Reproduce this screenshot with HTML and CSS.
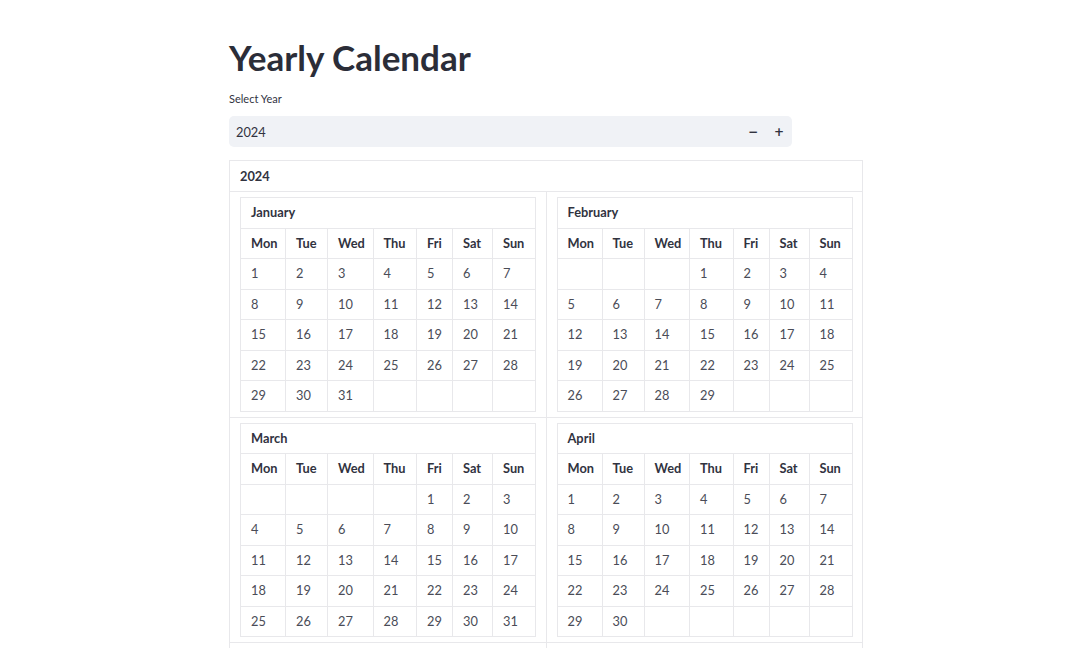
FILE: index.html
```html
<!DOCTYPE html>
<html lang="en">
<head>
<meta charset="utf-8">
<title>Yearly Calendar</title>
<link rel="stylesheet" href="styles.css">
</head>
<body>
<main class="page">
  <h1 class="title">Yearly Calendar</h1>
  <div class="field">
    <label class="field-label" for="year">Select Year</label>
    <div class="number-input">
      <input id="year" class="number-value" type="text" value="2024">
      <button class="step" type="button" aria-label="Decrement">&minus;</button>
      <button class="step" type="button" aria-label="Increment">+</button>
    </div>
  </div>

  <table class="year">
    <thead>
      <tr><th colspan="2" class="year-head">2024</th></tr>
    </thead>
    <tbody>
      <tr>
        <td class="year-cell">
          <table class="month">
            <colgroup><col class="c1"><col class="c2"><col class="c3"><col class="c4"><col class="c5"><col class="c6"><col class="c7"></colgroup>
            <tr><th colspan="7" class="month-name">January</th></tr>
            <tr class="dow"><th>Mon</th><th>Tue</th><th>Wed</th><th>Thu</th><th>Fri</th><th>Sat</th><th>Sun</th></tr>
            <tr><td>1</td><td>2</td><td>3</td><td>4</td><td>5</td><td>6</td><td>7</td></tr>
            <tr><td>8</td><td>9</td><td>10</td><td>11</td><td>12</td><td>13</td><td>14</td></tr>
            <tr><td>15</td><td>16</td><td>17</td><td>18</td><td>19</td><td>20</td><td>21</td></tr>
            <tr><td>22</td><td>23</td><td>24</td><td>25</td><td>26</td><td>27</td><td>28</td></tr>
            <tr><td>29</td><td>30</td><td>31</td><td></td><td></td><td></td><td></td></tr>
          </table>
        </td>
        <td class="year-cell">
          <table class="month">
            <colgroup><col class="c1"><col class="c2"><col class="c3"><col class="c4"><col class="c5"><col class="c6"><col class="c7"></colgroup>
            <tr><th colspan="7" class="month-name">February</th></tr>
            <tr class="dow"><th>Mon</th><th>Tue</th><th>Wed</th><th>Thu</th><th>Fri</th><th>Sat</th><th>Sun</th></tr>
            <tr><td></td><td></td><td></td><td>1</td><td>2</td><td>3</td><td>4</td></tr>
            <tr><td>5</td><td>6</td><td>7</td><td>8</td><td>9</td><td>10</td><td>11</td></tr>
            <tr><td>12</td><td>13</td><td>14</td><td>15</td><td>16</td><td>17</td><td>18</td></tr>
            <tr><td>19</td><td>20</td><td>21</td><td>22</td><td>23</td><td>24</td><td>25</td></tr>
            <tr><td>26</td><td>27</td><td>28</td><td>29</td><td></td><td></td><td></td></tr>
          </table>
        </td>
      </tr>
      <tr>
        <td class="year-cell">
          <table class="month">
            <colgroup><col class="c1"><col class="c2"><col class="c3"><col class="c4"><col class="c5"><col class="c6"><col class="c7"></colgroup>
            <tr><th colspan="7" class="month-name">March</th></tr>
            <tr class="dow"><th>Mon</th><th>Tue</th><th>Wed</th><th>Thu</th><th>Fri</th><th>Sat</th><th>Sun</th></tr>
            <tr><td></td><td></td><td></td><td></td><td>1</td><td>2</td><td>3</td></tr>
            <tr><td>4</td><td>5</td><td>6</td><td>7</td><td>8</td><td>9</td><td>10</td></tr>
            <tr><td>11</td><td>12</td><td>13</td><td>14</td><td>15</td><td>16</td><td>17</td></tr>
            <tr><td>18</td><td>19</td><td>20</td><td>21</td><td>22</td><td>23</td><td>24</td></tr>
            <tr><td>25</td><td>26</td><td>27</td><td>28</td><td>29</td><td>30</td><td>31</td></tr>
          </table>
        </td>
        <td class="year-cell">
          <table class="month">
            <colgroup><col class="c1"><col class="c2"><col class="c3"><col class="c4"><col class="c5"><col class="c6"><col class="c7"></colgroup>
            <tr><th colspan="7" class="month-name">April</th></tr>
            <tr class="dow"><th>Mon</th><th>Tue</th><th>Wed</th><th>Thu</th><th>Fri</th><th>Sat</th><th>Sun</th></tr>
            <tr><td>1</td><td>2</td><td>3</td><td>4</td><td>5</td><td>6</td><td>7</td></tr>
            <tr><td>8</td><td>9</td><td>10</td><td>11</td><td>12</td><td>13</td><td>14</td></tr>
            <tr><td>15</td><td>16</td><td>17</td><td>18</td><td>19</td><td>20</td><td>21</td></tr>
            <tr><td>22</td><td>23</td><td>24</td><td>25</td><td>26</td><td>27</td><td>28</td></tr>
            <tr><td>29</td><td>30</td><td></td><td></td><td></td><td></td><td></td></tr>
          </table>
        </td>
      </tr>
      <tr>
        <td class="year-cell">
          <table class="month">
            <colgroup><col class="c1"><col class="c2"><col class="c3"><col class="c4"><col class="c5"><col class="c6"><col class="c7"></colgroup>
            <tr><th colspan="7" class="month-name">May</th></tr>
            <tr class="dow"><th>Mon</th><th>Tue</th><th>Wed</th><th>Thu</th><th>Fri</th><th>Sat</th><th>Sun</th></tr>
            <tr><td></td><td></td><td>1</td><td>2</td><td>3</td><td>4</td><td>5</td></tr>
            <tr><td>6</td><td>7</td><td>8</td><td>9</td><td>10</td><td>11</td><td>12</td></tr>
            <tr><td>13</td><td>14</td><td>15</td><td>16</td><td>17</td><td>18</td><td>19</td></tr>
            <tr><td>20</td><td>21</td><td>22</td><td>23</td><td>24</td><td>25</td><td>26</td></tr>
            <tr><td>27</td><td>28</td><td>29</td><td>30</td><td>31</td><td></td><td></td></tr>
          </table>
        </td>
        <td class="year-cell">
          <table class="month">
            <colgroup><col class="c1"><col class="c2"><col class="c3"><col class="c4"><col class="c5"><col class="c6"><col class="c7"></colgroup>
            <tr><th colspan="7" class="month-name">June</th></tr>
            <tr class="dow"><th>Mon</th><th>Tue</th><th>Wed</th><th>Thu</th><th>Fri</th><th>Sat</th><th>Sun</th></tr>
            <tr><td></td><td></td><td></td><td></td><td></td><td>1</td><td>2</td></tr>
            <tr><td>3</td><td>4</td><td>5</td><td>6</td><td>7</td><td>8</td><td>9</td></tr>
            <tr><td>10</td><td>11</td><td>12</td><td>13</td><td>14</td><td>15</td><td>16</td></tr>
            <tr><td>17</td><td>18</td><td>19</td><td>20</td><td>21</td><td>22</td><td>23</td></tr>
            <tr><td>24</td><td>25</td><td>26</td><td>27</td><td>28</td><td>29</td><td>30</td></tr>
          </table>
        </td>
      </tr>
      <tr>
        <td class="year-cell">
          <table class="month">
            <colgroup><col class="c1"><col class="c2"><col class="c3"><col class="c4"><col class="c5"><col class="c6"><col class="c7"></colgroup>
            <tr><th colspan="7" class="month-name">July</th></tr>
            <tr class="dow"><th>Mon</th><th>Tue</th><th>Wed</th><th>Thu</th><th>Fri</th><th>Sat</th><th>Sun</th></tr>
            <tr><td>1</td><td>2</td><td>3</td><td>4</td><td>5</td><td>6</td><td>7</td></tr>
            <tr><td>8</td><td>9</td><td>10</td><td>11</td><td>12</td><td>13</td><td>14</td></tr>
            <tr><td>15</td><td>16</td><td>17</td><td>18</td><td>19</td><td>20</td><td>21</td></tr>
            <tr><td>22</td><td>23</td><td>24</td><td>25</td><td>26</td><td>27</td><td>28</td></tr>
            <tr><td>29</td><td>30</td><td>31</td><td></td><td></td><td></td><td></td></tr>
          </table>
        </td>
        <td class="year-cell">
          <table class="month">
            <colgroup><col class="c1"><col class="c2"><col class="c3"><col class="c4"><col class="c5"><col class="c6"><col class="c7"></colgroup>
            <tr><th colspan="7" class="month-name">August</th></tr>
            <tr class="dow"><th>Mon</th><th>Tue</th><th>Wed</th><th>Thu</th><th>Fri</th><th>Sat</th><th>Sun</th></tr>
            <tr><td></td><td></td><td></td><td>1</td><td>2</td><td>3</td><td>4</td></tr>
            <tr><td>5</td><td>6</td><td>7</td><td>8</td><td>9</td><td>10</td><td>11</td></tr>
            <tr><td>12</td><td>13</td><td>14</td><td>15</td><td>16</td><td>17</td><td>18</td></tr>
            <tr><td>19</td><td>20</td><td>21</td><td>22</td><td>23</td><td>24</td><td>25</td></tr>
            <tr><td>26</td><td>27</td><td>28</td><td>29</td><td>30</td><td>31</td><td></td></tr>
          </table>
        </td>
      </tr>
      <tr>
        <td class="year-cell">
          <table class="month">
            <colgroup><col class="c1"><col class="c2"><col class="c3"><col class="c4"><col class="c5"><col class="c6"><col class="c7"></colgroup>
            <tr><th colspan="7" class="month-name">September</th></tr>
            <tr class="dow"><th>Mon</th><th>Tue</th><th>Wed</th><th>Thu</th><th>Fri</th><th>Sat</th><th>Sun</th></tr>
            <tr><td></td><td></td><td></td><td></td><td></td><td></td><td>1</td></tr>
            <tr><td>2</td><td>3</td><td>4</td><td>5</td><td>6</td><td>7</td><td>8</td></tr>
            <tr><td>9</td><td>10</td><td>11</td><td>12</td><td>13</td><td>14</td><td>15</td></tr>
            <tr><td>16</td><td>17</td><td>18</td><td>19</td><td>20</td><td>21</td><td>22</td></tr>
            <tr><td>23</td><td>24</td><td>25</td><td>26</td><td>27</td><td>28</td><td>29</td></tr>
            <tr><td>30</td><td></td><td></td><td></td><td></td><td></td><td></td></tr>
          </table>
        </td>
        <td class="year-cell">
          <table class="month">
            <colgroup><col class="c1"><col class="c2"><col class="c3"><col class="c4"><col class="c5"><col class="c6"><col class="c7"></colgroup>
            <tr><th colspan="7" class="month-name">October</th></tr>
            <tr class="dow"><th>Mon</th><th>Tue</th><th>Wed</th><th>Thu</th><th>Fri</th><th>Sat</th><th>Sun</th></tr>
            <tr><td></td><td>1</td><td>2</td><td>3</td><td>4</td><td>5</td><td>6</td></tr>
            <tr><td>7</td><td>8</td><td>9</td><td>10</td><td>11</td><td>12</td><td>13</td></tr>
            <tr><td>14</td><td>15</td><td>16</td><td>17</td><td>18</td><td>19</td><td>20</td></tr>
            <tr><td>21</td><td>22</td><td>23</td><td>24</td><td>25</td><td>26</td><td>27</td></tr>
            <tr><td>28</td><td>29</td><td>30</td><td>31</td><td></td><td></td><td></td></tr>
          </table>
        </td>
      </tr>
      <tr>
        <td class="year-cell">
          <table class="month">
            <colgroup><col class="c1"><col class="c2"><col class="c3"><col class="c4"><col class="c5"><col class="c6"><col class="c7"></colgroup>
            <tr><th colspan="7" class="month-name">November</th></tr>
            <tr class="dow"><th>Mon</th><th>Tue</th><th>Wed</th><th>Thu</th><th>Fri</th><th>Sat</th><th>Sun</th></tr>
            <tr><td></td><td></td><td></td><td></td><td>1</td><td>2</td><td>3</td></tr>
            <tr><td>4</td><td>5</td><td>6</td><td>7</td><td>8</td><td>9</td><td>10</td></tr>
            <tr><td>11</td><td>12</td><td>13</td><td>14</td><td>15</td><td>16</td><td>17</td></tr>
            <tr><td>18</td><td>19</td><td>20</td><td>21</td><td>22</td><td>23</td><td>24</td></tr>
            <tr><td>25</td><td>26</td><td>27</td><td>28</td><td>29</td><td>30</td><td></td></tr>
          </table>
        </td>
        <td class="year-cell">
          <table class="month">
            <colgroup><col class="c1"><col class="c2"><col class="c3"><col class="c4"><col class="c5"><col class="c6"><col class="c7"></colgroup>
            <tr><th colspan="7" class="month-name">December</th></tr>
            <tr class="dow"><th>Mon</th><th>Tue</th><th>Wed</th><th>Thu</th><th>Fri</th><th>Sat</th><th>Sun</th></tr>
            <tr><td></td><td></td><td></td><td></td><td></td><td></td><td>1</td></tr>
            <tr><td>2</td><td>3</td><td>4</td><td>5</td><td>6</td><td>7</td><td>8</td></tr>
            <tr><td>9</td><td>10</td><td>11</td><td>12</td><td>13</td><td>14</td><td>15</td></tr>
            <tr><td>16</td><td>17</td><td>18</td><td>19</td><td>20</td><td>21</td><td>22</td></tr>
            <tr><td>23</td><td>24</td><td>25</td><td>26</td><td>27</td><td>28</td><td>29</td></tr>
            <tr><td>30</td><td>31</td><td></td><td></td><td></td><td></td><td></td></tr>
          </table>
        </td>
      </tr>
    </tbody>
  </table>
</main>
</body>
</html>
```

FILE: styles.css
```css
* { box-sizing: border-box; }

html, body {
  margin: 0;
  background: #ffffff;
}

body {
  font-family: "Lato", "Noto Sans", "Liberation Sans", sans-serif;
  color: #31333f;
}

.page {
  padding: 35px 0 80px 229px;
}

.title {
  margin: 0;
  font-size: 35px;
  font-weight: 700;
  line-height: 44px;
  color: #2b2d38;
}

.field {
  margin-top: 13px;
  width: 563px;
}

.field-label {
  display: block;
  font-size: 11px;
  line-height: 14px;
  margin-bottom: 10px;
  color: #31333f;
}

.number-input {
  display: flex;
  align-items: center;
  height: 31px;
  background: #f0f2f6;
  border-radius: 5px;
}

.number-value {
  flex: 1;
  min-width: 0;
  border: 0;
  background: transparent;
  font: inherit;
  font-size: 12.8px;
  color: #31333f;
  padding: 0 0 0 7px;
  height: 31px;
  outline: none;
}

.step {
  width: 26px;
  height: 31px;
  border: 0;
  background: transparent;
  font-family: "DejaVu Sans", sans-serif;
  font-size: 12px;
  font-weight: 700;
  color: #31333f;
  padding: 0;
}

.year {
  margin-top: 13px;
  border-collapse: collapse;
  table-layout: fixed;
  width: 634px;
  border: 1px solid #e8e8eb;
}

.year-head {
  text-align: left;
  font-size: 12.8px;
  font-weight: 700;
  line-height: 20px;
  padding: 5px 10px;
  border: 1px solid #e8e8eb;
}

.year-cell {
  width: 317px;
  padding: 5px 10px;
  border: 1px solid #e8e8eb;
  vertical-align: top;
}

.month {
  border-collapse: collapse;
  table-layout: fixed;
  width: 295px;
  font-size: 12.8px;
}

.month th,
.month td {
  border: 1px solid #e8e8eb;
  padding: 5px 10px;
  line-height: 19.5px;
  text-align: left;
  white-space: nowrap;
}

.month th { font-weight: 700; }
.month td { font-weight: 400; color: #4a4c57; }

.c1 { width: 45px; }
.c2 { width: 42px; }
.c3 { width: 45.5px; }
.c4 { width: 43.5px; }
.c5 { width: 36px; }
.c6 { width: 40px; }
.c7 { width: 43px; }
```
